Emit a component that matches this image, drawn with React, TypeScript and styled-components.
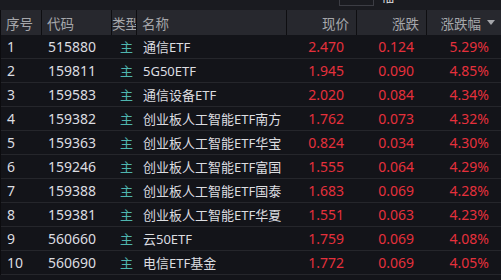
import styled, { createGlobalStyle } from 'styled-components'

const GlobalStyle = createGlobalStyle`
  html, body {
    margin: 0;
    padding: 0;
    background: #131419;
  }
  body {
    font-family: "Noto Sans", "Noto Sans CJK SC", sans-serif;
  }
`

type Row = {
  code: string
  name: string
  price: string
  change: string
  pct: string
}

const rows: Row[] = [
  { code: '515880', name: '通信ETF', price: '2.470', change: '0.124', pct: '5.29%' },
  { code: '159811', name: '5G50ETF', price: '1.945', change: '0.090', pct: '4.85%' },
  { code: '159583', name: '通信设备ETF', price: '2.020', change: '0.084', pct: '4.34%' },
  { code: '159382', name: '创业板人工智能ETF南方', price: '1.762', change: '0.073', pct: '4.32%' },
  { code: '159363', name: '创业板人工智能ETF华宝', price: '0.824', change: '0.034', pct: '4.30%' },
  { code: '159246', name: '创业板人工智能ETF富国', price: '1.555', change: '0.064', pct: '4.29%' },
  { code: '159388', name: '创业板人工智能ETF国泰', price: '1.683', change: '0.069', pct: '4.28%' },
  { code: '159381', name: '创业板人工智能ETF华夏', price: '1.551', change: '0.063', pct: '4.23%' },
  { code: '560660', name: '云50ETF', price: '1.759', change: '0.069', pct: '4.08%' },
  { code: '560690', name: '电信ETF基金', price: '1.772', change: '0.069', pct: '4.05%' },
]

const columns = '41px 70px 25px 150px 70px 70px 75px'

const Page = styled.div`
  width: 501px;
  height: 280px;
  overflow: hidden;
  background: #131419;
  display: flex;
  flex-direction: column;
`

const TopStrip = styled.div`
  height: 10px;
  background: #1a1b20;
  display: flex;
  align-items: flex-start;
  padding-left: 339px;
  gap: 7px;
  overflow: hidden;
`

const SearchBox = styled.div`
  width: 33px;
  height: 5px;
  border: 1px solid #3c3d44;
  border-top: none;
`

const ClippedGlyph = styled.span`
  color: #e6e6e6;
  font-size: 13px;
  line-height: 13px;
  margin-top: -10px;
`

const Table = styled.div`
  border-left: 1px solid #0c0c0f;
  display: flex;
  flex-direction: column;
`

const HeaderRow = styled.div`
  display: grid;
  grid-template-columns: ${columns};
  height: 25px;
  background: #27282e;
`

const HeaderCell = styled.div<{ $align?: 'left' | 'right' | 'flush'; $last?: boolean }>`
  display: flex;
  align-items: center;
  justify-content: ${(p) => (p.$align === 'right' ? 'flex-end' : 'flex-start')};
  padding: ${(p) =>
    p.$align === 'right' ? '0 7px 0 0' : p.$align === 'flush' ? '0' : '0 0 0 5px'};
  border-right: ${(p) => (p.$last ? 'none' : '1px solid #0e0e11')};
  color: #a6a7ab;
  font-size: 13.5px;
  white-space: nowrap;
  overflow: hidden;
  gap: 6px;
`

const SortArrow = styled.span`
  width: 0;
  height: 0;
  border-left: 4px solid transparent;
  border-right: 4px solid transparent;
  border-top: 5px solid #a6a7ab;
`

const DataRow = styled.div`
  display: grid;
  grid-template-columns: ${columns};
  height: 23px;
  border-bottom: 1px solid #25262b;
  background: #131419;
`

const Cell = styled.div<{ $align?: 'left' | 'right'; $tone?: 'plain' | 'up' }>`
  display: flex;
  align-items: center;
  justify-content: ${(p) => (p.$align === 'right' ? 'flex-end' : 'flex-start')};
  padding: ${(p) => (p.$align === 'right' ? '0 13px 0 0' : '0 0 0 6px')};
  color: ${(p) => (p.$tone === 'up' ? '#e5303c' : '#dcdde0')};
  font-size: 14px;
  white-space: nowrap;
  overflow: hidden;
`

const TypeCell = styled(Cell)`
  padding-left: 8px;
  color: #4fb5ae;
  font-size: 13px;
`

const NameCell = styled(Cell)`
  font-size: 13px;
`

export default function App() {
  return (
    <>
      <GlobalStyle />
      <Page>
        <TopStrip>
          <SearchBox />
          <ClippedGlyph>幅</ClippedGlyph>
        </TopStrip>
        <Table>
          <HeaderRow>
            <HeaderCell>序号</HeaderCell>
            <HeaderCell>代码</HeaderCell>
            <HeaderCell $align="flush">类型</HeaderCell>
            <HeaderCell>名称</HeaderCell>
            <HeaderCell $align="right">现价</HeaderCell>
            <HeaderCell $align="right">涨跌</HeaderCell>
            <HeaderCell $align="right" $last>
              涨跌幅
              <SortArrow />
            </HeaderCell>
          </HeaderRow>
          {rows.map((r, i) => (
            <DataRow key={r.code}>
              <Cell>{i + 1}</Cell>
              <Cell>{r.code}</Cell>
              <TypeCell>主</TypeCell>
              <NameCell>{r.name}</NameCell>
              <Cell $align="right" $tone="up">
                {r.price}
              </Cell>
              <Cell $align="right" $tone="up">
                {r.change}
              </Cell>
              <Cell $align="right" $tone="up">
                {r.pct}
              </Cell>
            </DataRow>
          ))}
        </Table>
      </Page>
    </>
  )
}
